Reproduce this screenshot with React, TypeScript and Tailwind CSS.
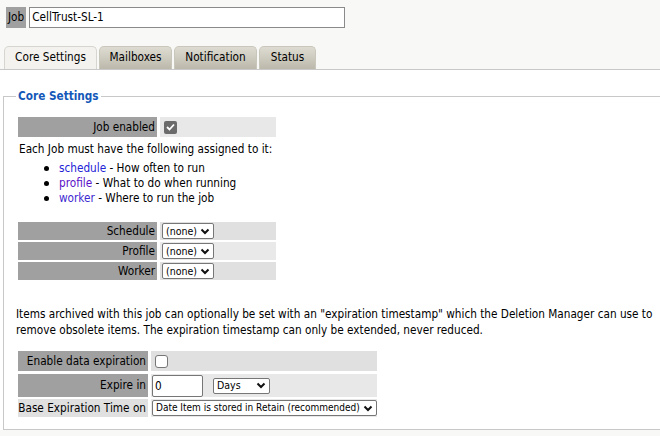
const font = "font-['DejaVu_Sans_Condensed','DejaVu_Sans',sans-serif]";

function Chevron() {
  return (
    <svg width="10" height="7" viewBox="0 0 10 7" className="shrink-0">
      <path d="M1.5 1.5 L5 5 L8.5 1.5" fill="none" stroke="#111" strokeWidth="2" />
    </svg>
  );
}

function FakeSelect({ label, width, size = "text-[10.5px]" }: { label: string; width: string; size?: string }) {
  return (
    <div
      className={`${width} ${size} h-[16px] flex items-center justify-between gap-[2px] bg-white border border-[#767676] rounded-[2px] pl-[3px] pr-[3px] leading-none whitespace-nowrap`}
    >
      <span>{label}</span>
      <Chevron />
    </div>
  );
}

function Checkbox({ checked }: { checked: boolean }) {
  if (checked) {
    return (
      <span className="w-[13px] h-[13px] rounded-[2px] bg-[#6b6b6b] flex items-center justify-center">
        <svg width="9" height="8" viewBox="0 0 9 8">
          <path d="M1 4 L3.5 6.5 L8 1.5" fill="none" stroke="#fff" strokeWidth="1.8" />
        </svg>
      </span>
    );
  }
  return <span className="w-[13px] h-[13px] rounded-[3px] bg-white border border-[#767676]" />;
}

function Bullet({ children }: { children: React.ReactNode }) {
  return (
    <li className="flex items-center">
      <span className="w-[5px] h-[5px] rounded-full bg-black ml-[26px] mr-[10px]" />
      <span>{children}</span>
    </li>
  );
}

const tabs = [
  { name: "Core Settings", w: "w-[93px]", active: true },
  { name: "Mailboxes", w: "w-[73px]", active: false },
  { name: "Notification", w: "w-[83px]", active: false },
  { name: "Status", w: "w-[57px]", active: false },
];

const assignments = [
  { name: "Schedule", bg: "bg-[#e0e0e0]" },
  { name: "Profile", bg: "bg-[#e9e9e9]" },
  { name: "Worker", bg: "bg-[#e0e0e0]" },
];

export default function App() {
  return (
    <div className={`w-full h-[436px] overflow-hidden bg-[#f8f8f6] text-[11.7px] text-black ${font}`}>
      {/* job name */}
      <div className="flex items-center gap-[3px] pl-[6px] pt-[7px]">
        <span className="h-[21px] leading-[21px] px-[2px] bg-[#a0a0a0]">Job</span>
        <div className="w-[316px] h-[21px] bg-white border border-[#8a8a8a] leading-[19px] px-[2px]">
          CellTrust-SL-1
        </div>
      </div>

      {/* tabs */}
      <div className="flex gap-[2px] pl-[4px] mt-[18px] h-[23px] items-end">
        {tabs.map((t) => (
          <div
            key={t.name}
            className={`${t.w} h-[23px] flex items-center justify-center rounded-t-[5px] border border-b-0 ${
              t.active
                ? "bg-[#f3f2ee] border-[#d6d5cf]"
                : "bg-gradient-to-b from-[#dedcd2] to-[#bcb9ab] border-[#c9c7bc]"
            }`}
          >
            {t.name}
          </div>
        ))}
      </div>

      {/* panel */}
      <div className="bg-white border-t border-[#c8c8c8] pt-[19px]">
        <fieldset className="ml-[3px] w-[720px] border border-[#c8c8c8] pl-[14px] pb-[12px]">
          <legend className="-ml-[2px] px-[2px] font-bold text-[#1358b8] leading-[14px]">Core Settings</legend>

          <div className="flex gap-[3px] mt-[14px] w-[258px] h-[20px]">
            <div className="w-[139px] bg-[#a0a0a0] text-right pr-[2px] leading-[20px]">Job enabled</div>
            <div className="flex-1 bg-[#e8e8e8] flex items-center pl-[4px]">
              <Checkbox checked />
            </div>
          </div>

          <p className="mt-[5px] leading-[14px] pl-[1px]">Each Job must have the following assigned to it:</p>
          <ul className="mt-[5px] leading-[15px]">
            <Bullet>
              <span className="text-[#2323d6]">schedule</span> - How often to run
            </Bullet>
            <Bullet>
              <span className="text-[#5a10c8]">profile</span> - What to do when running
            </Bullet>
            <Bullet>
              <span className="text-[#3d2ad0]">worker</span> - Where to run the job
            </Bullet>
          </ul>

          <div className="mt-[16px] w-[258px] flex flex-col gap-[2px]">
            {assignments.map((a) => (
              <div key={a.name} className="flex gap-[3px] h-[18px]">
                <div className="w-[139px] bg-[#a0a0a0] text-right pr-[2px] leading-[18px]">{a.name}</div>
                <div className={`flex-1 ${a.bg} flex items-center pl-[2px]`}>
                  <FakeSelect label="(none)" width="w-[52px]" />
                </div>
              </div>
            ))}
          </div>

          <p className="mt-[26px] leading-[16px] -ml-[2px] whitespace-nowrap">
            Items archived with this job can optionally be set with an "expiration timestamp" which the Deletion Manager can use to
            <br />
            remove obsolete items. The expiration timestamp can only be extended, never reduced.
          </p>

          <div className="mt-[13px] w-[359px] flex flex-col gap-[2px] whitespace-nowrap">
            <div className="flex gap-[3px] h-[20px]">
              <div className="w-[130px] bg-[#a0a0a0] text-right pr-[2px] leading-[20px]">Enable data expiration</div>
              <div className="flex-1 bg-[#e0e0e0] flex items-center pl-[4px]">
                <Checkbox checked={false} />
              </div>
            </div>
            <div className="flex gap-[3px] h-[23px] mt-[1px]">
              <div className="w-[130px] bg-[#a0a0a0] text-right pr-[2px] leading-[23px]">Expire in</div>
              <div className="flex-1 bg-[#e8e8e8] flex items-center pl-[1px] gap-[10px]">
                <div className="w-[51px] h-[22px] bg-white border border-[#767676] rounded-[2px] px-[2px] leading-[20px]">0</div>
                <FakeSelect label="Days" width="w-[57px]" />
              </div>
            </div>
            <div className="flex gap-[3px] h-[18px]">
              <div className="w-[130px] bg-[#e0e0e0] text-right pr-[2px] leading-[18px]">Base Expiration Time on</div>
              <div className="flex-1 bg-[#e8e8e8] flex items-center pl-[1px]">
                <FakeSelect label="Date Item is stored in Retain (recommended)" width="w-[225px]" size="text-[10px]" />
              </div>
            </div>
          </div>
        </fieldset>
      </div>
    </div>
  );
}
